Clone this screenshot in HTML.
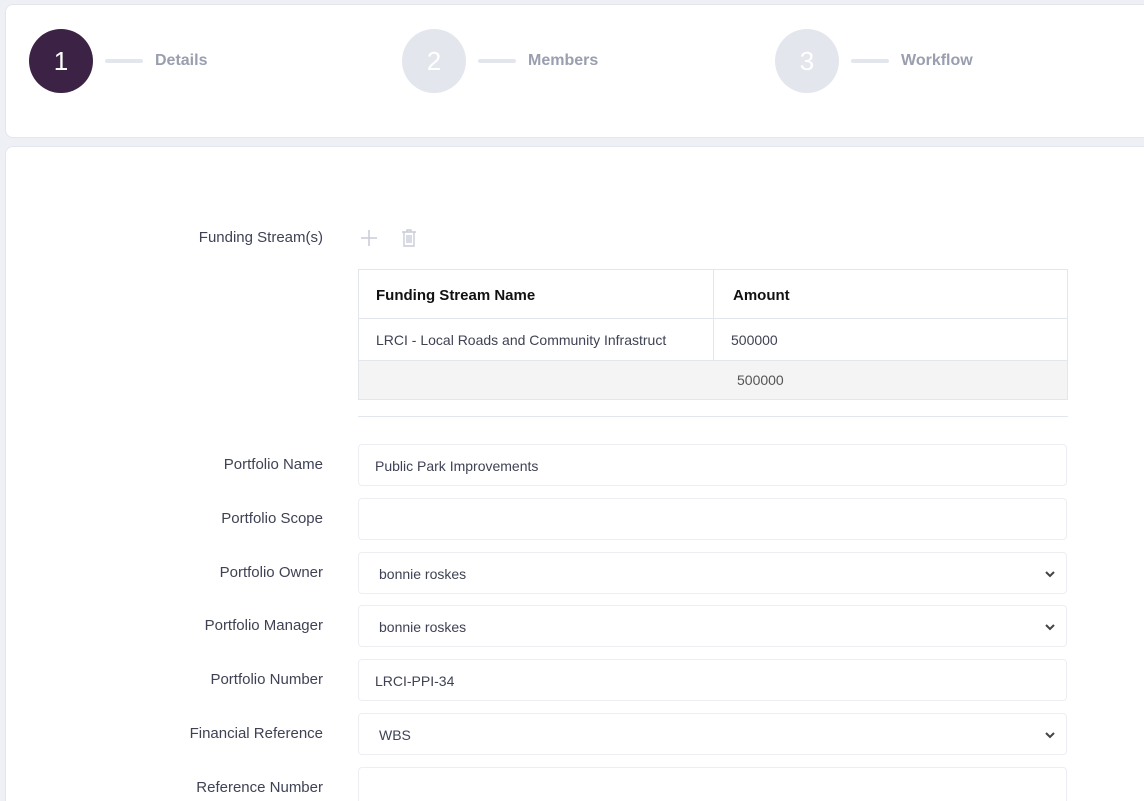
<!DOCTYPE html>
<html style="height:801px;overflow:hidden"><head><style>
body{margin:0;width:1144px;height:801px;overflow:hidden;background:#eef0f5;font-family:"Liberation Sans",sans-serif;position:relative}
.card{position:absolute;background:#fff;border-radius:8px;border:1px solid #e4e6ee}
.step{position:absolute;top:29px;height:64px;display:flex;align-items:center}
.c{width:64px;height:64px;border-radius:50%;background:#e4e6ee;color:#fff;font-size:26px;display:flex;align-items:center;justify-content:center}
.ln{width:38px;height:4px;background:#e4e6ee;border-radius:2px;margin:0 12px}
.st{font-size:16px;font-weight:bold;color:#9a9eae}
.lbl{position:absolute;right:821px;font-size:15px;color:#3f4254;text-align:right}
.in{position:absolute;left:358px;width:707px;height:40px;border:1px solid #eceef3;border-radius:4px;background:#fff;font-size:14px;color:#3f4254;line-height:42px;box-sizing:content-box}
.in span{padding-left:16px}
.in.s span{padding-left:20px}
.chev{position:absolute;right:4px;top:0}
table{position:absolute;left:358px;top:269px;width:710px;border-collapse:collapse;font-size:14px;color:#3f4254}
td{border:1px solid #e4e6ee;padding:0 17px}
</style></head><body>
<div class="card" style="left:5px;top:4px;width:1160px;height:132px"></div>
<div class="card" style="left:5px;top:146px;width:1160px;height:680px"></div>
<div class="step" style="left:29px"><div class="c" style="background:#3c2244">1</div><div class="ln"></div><div class="st">Details</div></div>
<div class="step" style="left:402px"><div class="c">2</div><div class="ln"></div><div class="st">Members</div></div>
<div class="step" style="left:775px"><div class="c">3</div><div class="ln"></div><div class="st">Workflow</div></div>

<div class="lbl" style="top:229px">Funding Stream(s)</div>
<svg style="position:absolute;left:360px;top:229px" width="18" height="18"><path d="M9 1V17M1 9H17" stroke="#c9ccd6" stroke-width="1.5"/></svg>
<svg style="position:absolute;left:400px;top:228px" width="18" height="20"><path d="M4 4H14V18H4Z M2 4H16 M7 4V2H11V4 M7 7V15 M9 7V15 M11 7V15" stroke="#c9ccd6" stroke-width="1.4" fill="none"/></svg>
<table>
<tr style="height:49px"><td style="width:320px;font-weight:bold;font-size:15px;color:#111;padding-top:3px">Funding Stream Name</td><td style="font-weight:bold;font-size:15px;color:#111;padding-left:19px;padding-top:3px">Amount</td></tr>
<tr style="height:42px"><td style="padding-left:17px;padding-right:0;white-space:nowrap">LRCI - Local Roads and Community Infrastruct</td><td style="padding-left:17px">500000</td></tr>
<tr style="height:39px;background:#f4f4f4"><td colspan="2" style="padding-left:378px;color:#555">500000</td></tr>
</table>
<div style="position:absolute;left:358px;top:416px;width:710px;height:1px;background:#e4e6ee"></div>

<div class="lbl" style="top:456px">Portfolio Name</div><div class="in" style="top:444px"><span>Public Park Improvements</span></div>
<div class="lbl" style="top:510px">Portfolio Scope</div><div class="in" style="top:498px"></div>
<div class="lbl" style="top:564px">Portfolio Owner</div><div class="in s" style="top:552px"><span>bonnie roskes</span><svg class="chev" width="20" height="40"><path d="M4 19L8 23L12 19" stroke="#444" stroke-width="2" fill="none"/></svg></div>
<div class="lbl" style="top:617px">Portfolio Manager</div><div class="in s" style="top:605px"><span>bonnie roskes</span><svg class="chev" width="20" height="40"><path d="M4 19L8 23L12 19" stroke="#444" stroke-width="2" fill="none"/></svg></div>
<div class="lbl" style="top:671px">Portfolio Number</div><div class="in" style="top:659px"><span>LRCI-PPI-34</span></div>
<div class="lbl" style="top:725px">Financial Reference</div><div class="in s" style="top:713px"><span>WBS</span><svg class="chev" width="20" height="40"><path d="M4 19L8 23L12 19" stroke="#444" stroke-width="2" fill="none"/></svg></div>
<div class="lbl" style="top:779px">Reference Number</div><div class="in" style="top:767px"></div>
</body></html>
